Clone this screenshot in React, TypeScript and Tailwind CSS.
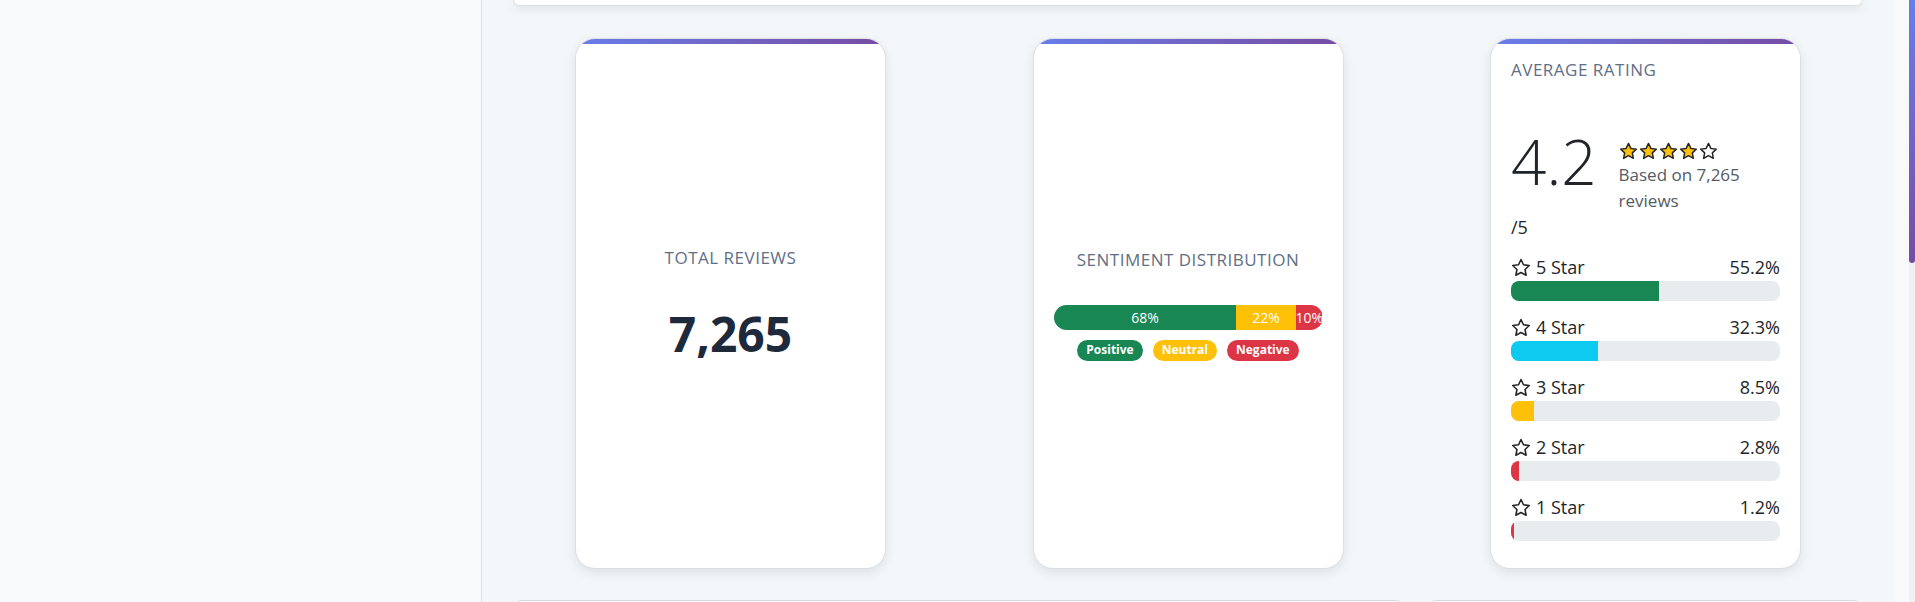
import React from "react";

const STAR_POINTS =
  "12,1.8 15,8.2 22,9.1 16.9,13.9 18.2,20.9 12,17.5 5.8,20.9 7.1,13.9 2,9.1 9,8.2";

const Star = ({ filled, size = 19 }: { filled: boolean; size?: number }) => (
  <svg width={size} height={size - 1} viewBox="0 0 24 23">
    <polygon
      points={STAR_POINTS}
      fill={filled ? "#ffc107" : "#ffffff"}
      stroke="#262626"
      strokeWidth="1.9"
      strokeLinejoin="round"
    />
  </svg>
);

const ratings = [
  { label: "5 Star", pct: 55.2, color: "bg-[#198754]" },
  { label: "4 Star", pct: 32.3, color: "bg-[#0dcaf0]" },
  { label: "3 Star", pct: 8.5, color: "bg-[#ffc107]" },
  { label: "2 Star", pct: 2.8, color: "bg-[#dc3545]" },
  { label: "1 Star", pct: 1.2, color: "bg-[#dc3545]" },
];

const Card = ({ children }: { children: React.ReactNode }) => (
  <div className="flex h-[531px] w-[311px] flex-col overflow-hidden rounded-[20px] border border-[#dcdfe3] bg-white shadow-[0_4px_12px_rgba(0,0,0,0.09)]">
    <div className="h-[5px] shrink-0 bg-linear-to-r from-[#667eea] to-[#764ba2]" />
    {children}
  </div>
);

const CardTitle = ({ children }: { children: React.ReactNode }) => (
  <div className="text-[17px] leading-[25.5px] font-medium tracking-[0.5px] text-[#5f6f86] uppercase">
    {children}
  </div>
);

export default function App() {
  return (
    <div className="flex h-[602px] w-full overflow-hidden font-['Open_Sans',sans-serif]">
      {/* sidebar */}
      <div className="h-full w-[482px] shrink-0 border-r border-[#dfe3e8] bg-[#f8f9fa]" />

      {/* main */}
      <div className="flex h-full w-[1412px] shrink-0 flex-col bg-[#f4f7fa] px-[31px]">
        <div className="h-[6px] shrink-0 rounded-b-lg border border-t-0 border-[#dcdfe3] bg-white shadow-[0_3px_8px_rgba(0,0,0,0.1)]" />

        <div className="mt-[32px] flex justify-between px-[62px]">
          {/* total reviews */}
          <Card>
            <div className="flex flex-1 flex-col items-center justify-center pb-[4px]">
              <CardTitle>Total Reviews</CardTitle>
              <div className="mt-[34px] text-5xl leading-[1.2] font-bold text-[#1e293b]">7,265</div>
            </div>
          </Card>

          {/* sentiment */}
          <Card>
            <div className="flex flex-1 flex-col items-center justify-center px-5 pb-[4px]">
              <CardTitle>Sentiment Distribution</CardTitle>
              <div className="mt-[32px] flex h-[25px] w-full overflow-hidden rounded-full text-[14px] text-white">
                <div className="flex w-[68%] items-center justify-center bg-[#198754]">68%</div>
                <div className="flex w-[22%] items-center justify-center bg-[#ffc107]">22%</div>
                <div className="flex w-[10%] items-center justify-start bg-[#dc3545] whitespace-nowrap">10%</div>
              </div>
              <div className="mt-[10px] flex gap-[10px] text-[12px] font-bold text-white">
                <span className="flex h-[21px] items-center rounded-full bg-[#198754] px-[9px]">Positive</span>
                <span className="flex h-[21px] items-center rounded-full bg-[#ffc107] px-[9px]">Neutral</span>
                <span className="flex h-[21px] items-center rounded-full bg-[#dc3545] px-[9px]">Negative</span>
              </div>
            </div>
          </Card>

          {/* average rating */}
          <Card>
            <div className="flex flex-1 flex-col px-5 pt-[13px]">
              <CardTitle>Average Rating</CardTitle>
              <div className="mt-[47px] flex items-start gap-[22px]">
                <div className="text-[62px] leading-none font-light text-[#212529]">4.2</div>
                <div className="mt-[10px] flex-1">
                  <div className="flex h-[22px] items-center gap-[1px]">
                    <Star filled />
                    <Star filled />
                    <Star filled />
                    <Star filled />
                    <Star filled={false} />
                  </div>
                  <div className="text-[17px] leading-[26px] text-[#555b62]">Based on 7,265 reviews</div>
                </div>
              </div>
              <div className="text-[18px] leading-[27px] text-[#212529]">/5</div>

              <div className="mt-[13px] flex flex-col gap-[13px]">
                {ratings.map((r) => (
                  <div key={r.label}>
                    <div className="flex h-[27px] items-center justify-between text-[18px] text-[#212529]">
                      <span className="flex items-center gap-[5px]">
                        <Star filled={false} size={20} />
                        {r.label}
                      </span>
                      <span>{r.pct}%</span>
                    </div>
                    <div className="h-[20px] w-full overflow-hidden rounded-[8px] bg-[#e9ecef]">
                      <div className={`h-full ${r.color}`} style={{ width: `${r.pct}%` }} />
                    </div>
                  </div>
                ))}
              </div>
            </div>
          </Card>
        </div>

        <div className="mt-[31px] flex gap-[28px] px-[2px]">
          <div className="h-[20px] w-[887px] rounded-t-md border border-[#d6dae0] bg-white" />
          <div className="h-[20px] w-[430px] rounded-t-md border border-[#d6dae0] bg-white" />
        </div>
      </div>

      <div className="h-full flex-1 bg-[#f7f9fb]" />

      {/* scrollbar */}
      <div className="h-full w-[6px] shrink-0 bg-[#f1f1f1]">
        <div className="h-[263px] w-full rounded-b-full bg-linear-to-b from-[#667eea] to-[#764ba2]" />
      </div>
    </div>
  );
}
